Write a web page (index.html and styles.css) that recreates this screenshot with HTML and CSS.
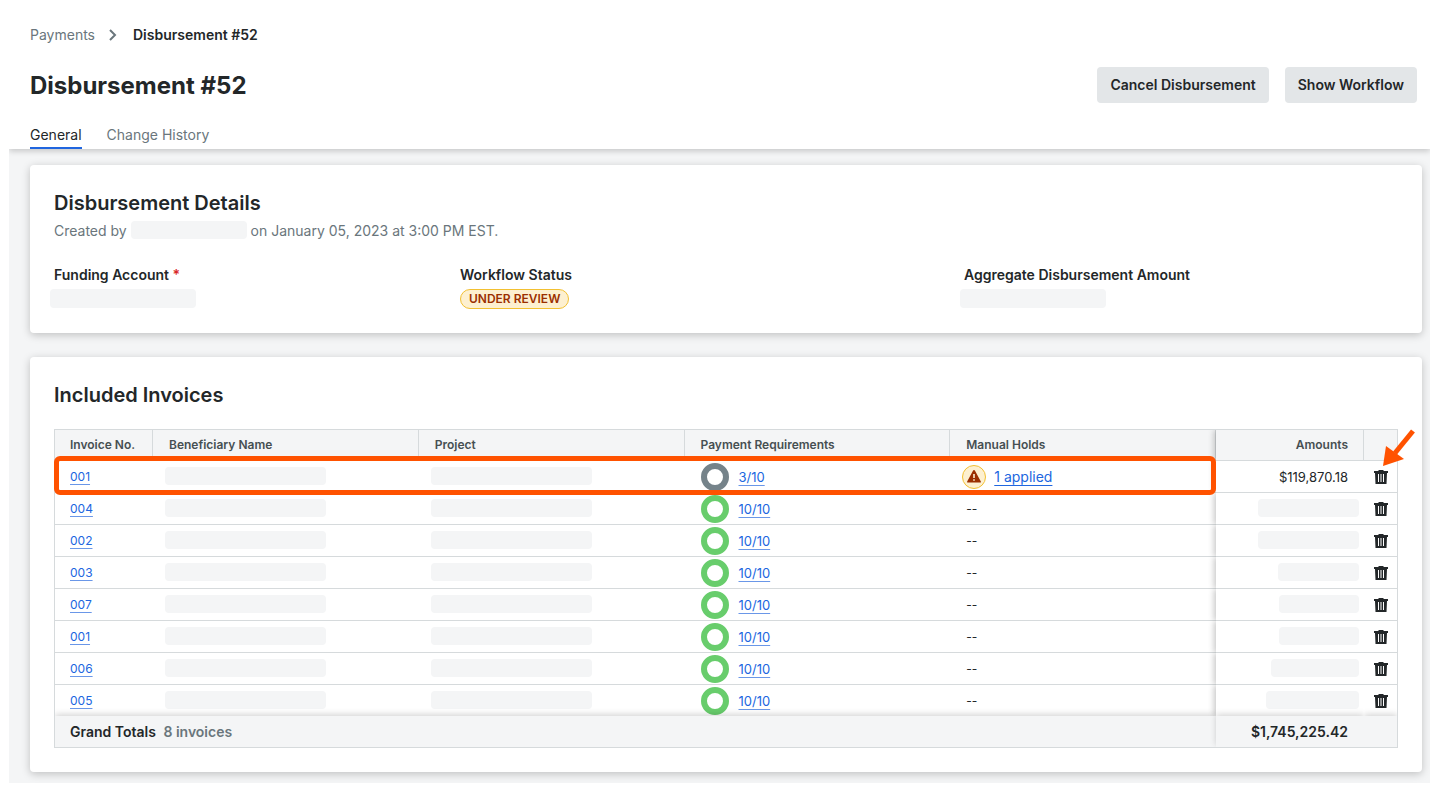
FILE: index.html
```html
<!DOCTYPE html>
<html lang="en">
<head>
    <meta charset="UTF-8">
    <meta name="viewport" content="width=device-width, initial-scale=1.0">
    <title>Disbursement #52</title>
    <link rel="stylesheet" href="styles.css">
</head>
<body>
    <!-- Shared icons -->
    <svg class="sprite" aria-hidden="true">
        <symbol id="icon-trash" viewBox="0 0 14 14">
            <path fill-rule="evenodd" d="M4.5 0h5v1H14v2h-1l-.5 11h-11L1 3H0V1h4.5zM4 4v8h1V4zm2.5 0v8h1V4zM9 4v8h1V4z"/>
        </symbol>
        <symbol id="icon-warning" viewBox="0 0 14 13">
            <path fill-rule="evenodd" d="M7 0q.6 0 .9.5l5.8 10.8q.6 1.2-.6 1.2H.9Q-.3 12.500.3 11.300L6.100.500Q6.400 0 7 0zM6.200 4v4h1.600V4zm0 5.200v1.600h1.600V9.200z"/>
        </symbol>
    </svg>

    <div class="app">
        <header class="page-header">
            <nav class="breadcrumbs" aria-label="Breadcrumb">
                <a href="#">Payments</a>
                <svg class="chevron" viewBox="0 0 8 12" aria-hidden="true"><path d="M1 1l5 5-5 5"/></svg>
                <span class="current">Disbursement #52</span>
            </nav>
            <div class="title-row">
                <h1>Disbursement #52</h1>
                <div class="actions">
                    <button type="button">Cancel Disbursement</button>
                    <button type="button">Show Workflow</button>
                </div>
            </div>
            <nav class="tabs">
                <a href="#" class="active">General</a>
                <a href="#">Change History</a>
            </nav>
        </header>

        <main class="content">
            <section class="card">
                <h2>Disbursement Details</h2>
                <p class="created">Created by <span class="skeleton author"></span> on January 05, 2023 at 3:00 PM EST.</p>
                <dl class="fields">
                    <div>
                        <dt>Funding Account <span class="required">*</span></dt>
                        <dd><span class="skeleton field-value"></span></dd>
                    </div>
                    <div>
                        <dt>Workflow Status</dt>
                        <dd><span class="pill">UNDER REVIEW</span></dd>
                    </div>
                    <div>
                        <dt>Aggregate Disbursement Amount</dt>
                        <dd><span class="skeleton field-value"></span></dd>
                    </div>
                </dl>
            </section>

            <section class="card">
                <h2>Included Invoices</h2>
                <div class="table-wrap">
                    <table>
                        <colgroup>
                            <col class="col-number">
                            <col>
                            <col>
                            <col>
                            <col>
                            <col class="col-amount">
                            <col class="col-delete">
                        </colgroup>
                        <thead>
                            <tr>
                                <th>Invoice No.</th>
                                <th>Beneficiary Name</th>
                                <th>Project</th>
                                <th>Payment Requirements</th>
                                <th>Manual Holds</th>
                                <th class="amount">Amounts</th>
                                <th></th>
                            </tr>
                        </thead>
                        <tbody>
                            <tr>
                                <td><a href="#">001</a></td>
                                <td class="masked"><span class="skeleton"></span></td>
                                <td class="masked"><span class="skeleton"></span></td>
                                <td><div class="progress"><span class="ring partial"></span><a href="#">3/10</a></div></td>
                                <td class="masked"><div class="hold"><span class="hold-icon"><svg aria-hidden="true"><use href="#icon-warning"/></svg></span><a href="#">1 applied</a></div></td>
                                <td class="amount">$119,870.18</td>
                                <td class="delete"><button type="button" aria-label="Remove invoice"><svg><use href="#icon-trash"/></svg></button></td>
                            </tr>
                            <tr>
                                <td><a href="#">004</a></td>
                                <td class="masked"><span class="skeleton"></span></td>
                                <td class="masked"><span class="skeleton"></span></td>
                                <td><div class="progress"><span class="ring"></span><a href="#">10/10</a></div></td>
                                <td>--</td>
                                <td class="amount masked"><span class="skeleton" style="width: 101px"></span></td>
                                <td class="delete"><button type="button" aria-label="Remove invoice"><svg><use href="#icon-trash"/></svg></button></td>
                            </tr>
                            <tr>
                                <td><a href="#">002</a></td>
                                <td class="masked"><span class="skeleton"></span></td>
                                <td class="masked"><span class="skeleton"></span></td>
                                <td><div class="progress"><span class="ring"></span><a href="#">10/10</a></div></td>
                                <td>--</td>
                                <td class="amount masked"><span class="skeleton" style="width: 101px"></span></td>
                                <td class="delete"><button type="button" aria-label="Remove invoice"><svg><use href="#icon-trash"/></svg></button></td>
                            </tr>
                            <tr>
                                <td><a href="#">003</a></td>
                                <td class="masked"><span class="skeleton"></span></td>
                                <td class="masked"><span class="skeleton"></span></td>
                                <td><div class="progress"><span class="ring"></span><a href="#">10/10</a></div></td>
                                <td>--</td>
                                <td class="amount masked"><span class="skeleton" style="width: 81px"></span></td>
                                <td class="delete"><button type="button" aria-label="Remove invoice"><svg><use href="#icon-trash"/></svg></button></td>
                            </tr>
                            <tr>
                                <td><a href="#">007</a></td>
                                <td class="masked"><span class="skeleton"></span></td>
                                <td class="masked"><span class="skeleton"></span></td>
                                <td><div class="progress"><span class="ring"></span><a href="#">10/10</a></div></td>
                                <td>--</td>
                                <td class="amount masked"><span class="skeleton" style="width: 80px"></span></td>
                                <td class="delete"><button type="button" aria-label="Remove invoice"><svg><use href="#icon-trash"/></svg></button></td>
                            </tr>
                            <tr>
                                <td><a href="#">001</a></td>
                                <td class="masked"><span class="skeleton"></span></td>
                                <td class="masked"><span class="skeleton"></span></td>
                                <td><div class="progress"><span class="ring"></span><a href="#">10/10</a></div></td>
                                <td>--</td>
                                <td class="amount masked"><span class="skeleton" style="width: 80px"></span></td>
                                <td class="delete"><button type="button" aria-label="Remove invoice"><svg><use href="#icon-trash"/></svg></button></td>
                            </tr>
                            <tr>
                                <td><a href="#">006</a></td>
                                <td class="masked"><span class="skeleton"></span></td>
                                <td class="masked"><span class="skeleton"></span></td>
                                <td><div class="progress"><span class="ring"></span><a href="#">10/10</a></div></td>
                                <td>--</td>
                                <td class="amount masked"><span class="skeleton" style="width: 88px"></span></td>
                                <td class="delete"><button type="button" aria-label="Remove invoice"><svg><use href="#icon-trash"/></svg></button></td>
                            </tr>
                            <tr>
                                <td><a href="#">005</a></td>
                                <td class="masked"><span class="skeleton"></span></td>
                                <td class="masked"><span class="skeleton"></span></td>
                                <td><div class="progress"><span class="ring"></span><a href="#">10/10</a></div></td>
                                <td>--</td>
                                <td class="amount masked"><span class="skeleton" style="width: 93px"></span></td>
                                <td class="delete"><button type="button" aria-label="Remove invoice"><svg><use href="#icon-trash"/></svg></button></td>
                            </tr>
                        </tbody>
                        <tfoot>
                            <tr>
                                <td colspan="5">Grand Totals <span class="count">8 invoices</span></td>
                                <td class="amount">$1,745,225.42</td>
                                <td></td>
                            </tr>
                        </tfoot>
                    </table>
                    <!-- Callouts on the first row -->
                    <div class="row-highlight"></div>
                    <svg class="arrow" viewBox="0 0 34 38" aria-hidden="true">
                        <path class="shaft" d="M31 2L13 24"/>
                        <path class="tip" d="M1 37L4 17l18 13z"/>
                    </svg>
                </div>
            </section>
        </main>
    </div>
</body>
</html>
```
FILE: styles.css
```css
* {
    margin: 0;
    padding: 0;
    box-sizing: border-box;
}

body {
    background: #fff;
    color: #232729;
    font-family: 'Inter', 'Liberation Sans', sans-serif;
    font-size: 14px;
    line-height: 20px;
}

button {
    font-family: inherit;
    border: none;
    cursor: pointer;
}

.sprite {
    display: none;
}

.app {
    margin: 0 9px;
}

/* Header */
.page-header {
    position: relative;
    display: flex;
    flex-direction: column;
    gap: 22px;
    padding: 25px 13px 0 21px;
    background: #fff;
    box-shadow: 0 2px 6px rgba(0, 0, 0, 0.2);
    clip-path: inset(0 0 -12px 0);
}

.breadcrumbs {
    display: flex;
    align-items: center;
    gap: 14px;
}

.breadcrumbs a,
.tabs a {
    color: #6a767c;
    text-decoration: none;
}

.breadcrumbs .current {
    font-weight: 600;
    margin-left: 2px;
}

.chevron {
    width: 8px;
    height: 12px;
    fill: none;
    stroke: #6a767c;
    stroke-width: 2;
}

.title-row {
    display: flex;
    align-items: center;
    justify-content: space-between;
}

h1 {
    padding-top: 2px;
    font-size: 24px;
    line-height: 32px;
    font-weight: 700;
}

.actions {
    display: flex;
    gap: 16px;
}

.actions button {
    height: 36px;
    padding: 0 13px 2px;
    border-radius: 4px;
    background: #e3e6e8;
    color: #232729;
    font-size: 14px;
    font-weight: 600;
}

.tabs {
    display: flex;
    gap: 25px;
}

.tabs a {
    padding-bottom: 2px;
    border-bottom: 2px solid transparent;
}

.tabs a.active {
    color: #232729;
    border-color: #2066df;
}

/* Cards */
.content {
    display: flex;
    flex-direction: column;
    gap: 24px;
    padding: 16px 8px 11px 21px;
    background: #f4f5f6;
    overflow: hidden;
}

.card {
    padding: 24px;
    background: #fff;
    border-radius: 4px;
    box-shadow: 0 2px 8px rgba(0, 0, 0, 0.22);
}

h2 {
    font-size: 20px;
    line-height: 28px;
    font-weight: 600;
}

.skeleton {
    display: block;
    width: 161px;
    height: 18px;
    border-radius: 4px;
    background: #f4f5f6;
}

.created {
    margin: 4px 0 24px;
    color: #6a767c;
}

.skeleton.author {
    display: inline-block;
    width: 116px;
    vertical-align: text-bottom;
}

.fields {
    display: grid;
    grid-template-columns: 406fr 504fr 434fr;
}

.fields dt {
    font-weight: 600;
    margin-bottom: 4px;
}

.fields dd {
    height: 20px;
}

.required {
    color: #d92626;
}

.skeleton.field-value {
    width: 146px;
    height: 19px;
    margin-left: -4px;
}

.pill {
    display: inline-block;
    padding: 0 8px;
    border: 1px solid #f2c032;
    border-radius: 10px;
    background: #fdf0d0;
    color: #9b2f00;
    font-size: 12px;
    line-height: 18px;
    font-weight: 600;
    vertical-align: top;
}

/* Invoice table */
.table-wrap {
    position: relative;
    margin-top: 20px;
}

table {
    width: 100%;
    table-layout: fixed;
    border: 1px solid #d6dadc;
    border-collapse: separate;
    border-spacing: 0;
    font-size: 12px;
}

.col-number {
    width: 98px;
}

.col-amount {
    width: 148px;
}

.col-delete {
    width: 33px;
}

th,
td {
    height: 32px;
    padding: 0 15px;
    border-bottom: 1px solid #d6dadc;
    text-align: left;
    vertical-align: middle;
}

th {
    height: 31px;
    border-right: 1px solid #d6dadc;
    background: #f4f5f6;
    color: #464f52;
    font-weight: 600;
}

th:last-child {
    border-right: none;
}

th + th,
td + td {
    padding-left: 16px;
}

td.masked {
    padding-left: 12px;
}

td .skeleton {
    margin-bottom: 2px;
}

td a {
    color: #2066df;
    text-decoration: underline;
    text-decoration-color: #6a97e8;
    text-decoration-thickness: 1px;
    text-underline-offset: 3px;
}

.amount {
    position: relative;
    text-align: right;
    box-shadow: -2px 0 6px rgba(0, 0, 0, 0.22);
    clip-path: inset(0 0 0 -8px);
}

td.amount {
    padding-right: 16px;
    font-size: 13px;
}

td.amount.masked {
    padding-right: 5px;
}

.amount .skeleton {
    margin-left: auto;
}

.progress,
.hold {
    display: flex;
    align-items: center;
}

.progress {
    gap: 10px;
    font-size: 13px;
}

.ring {
    width: 28px;
    height: 28px;
    border: 6px solid #68cd6c;
    border-radius: 50%;
}

.ring.partial {
    border-color: #75838a;
}

.hold {
    gap: 8px;
    font-size: 14px;
}

.hold a {
    text-decoration-color: #2066df;
}

.hold-icon {
    display: flex;
    align-items: center;
    justify-content: center;
    width: 24px;
    height: 24px;
    border: 1px solid #f2c032;
    border-radius: 50%;
    background: #fdf0d0;
}

.hold-icon svg {
    width: 14px;
    height: 13px;
    fill: #9b2f00;
}

td.delete {
    padding: 0 0 0 10px;
}

.delete button {
    display: block;
    width: 14px;
    height: 14px;
    background: none;
}

.delete svg {
    display: block;
    width: 14px;
    height: 14px;
    fill: #232729;
}

tbody tr:last-child td {
    height: 31px;
    border-bottom: none;
}

tfoot td,
tfoot td.amount {
    position: relative;
    height: 31px;
    border-bottom: none;
    background: #f4f5f6;
    box-shadow: 0 -2px 6px rgba(0, 0, 0, 0.16);
    clip-path: inset(-8px 0 0 0);
    font-size: 14px;
    font-weight: 600;
}

tfoot td.amount {
    clip-path: inset(-8px 0 0 -8px);
}

.count {
    margin-left: 4px;
    color: #6a767c;
}

.row-highlight {
    position: absolute;
    top: 27px;
    left: 0;
    right: 182px;
    height: 39px;
    border: 5px solid #ff5200;
    border-radius: 6px;
    pointer-events: none;
}

.arrow {
    position: absolute;
    top: 0;
    right: -18px;
    width: 34px;
    height: 38px;
}

.arrow .shaft {
    stroke: #ff5200;
    stroke-width: 5;
}

.arrow .tip {
    fill: #ff5200;
}
```
